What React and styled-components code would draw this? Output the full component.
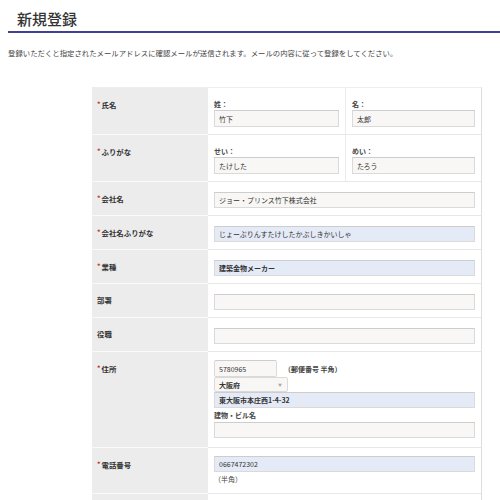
import React from "react";
import styled, { createGlobalStyle } from "styled-components";

const Global = createGlobalStyle`
  html, body { margin: 0; padding: 0; background: #fff; }
  body { font-family: "Noto Sans CJK JP", "Noto Sans", sans-serif; color: #333; }
  * { box-sizing: border-box; }
`;

const Page = styled.div`
  padding-left: 8px;
  width: 500px;
`;

const Title = styled.h1`
  margin: 0;
  padding: 10px 0 4px 9px;
  font-size: 15px;
  line-height: 17px;
  font-weight: 500;
  color: #333;
  border-bottom: 2px solid #3e4090;
`;

const Lead = styled.p`
  margin: 14px 0 0;
  font-size: 7.38px;
  line-height: 11px;
  color: #444;
  white-space: nowrap;
`;

const Table = styled.div`
  margin: 29px 0 0 84px;
  width: 390px;
  border-top: 1px solid #eee;
  border-right: 1px solid #ddd;
`;

const Row = styled.div`
  display: grid;
  grid-template-columns: 116px 1fr;
`;

const Label = styled.div`
  background: #ececec;
  border-bottom: 1px solid #fafafa;
  padding: 10px 0 0 5px;
  font-size: 7.4px;
  line-height: 12px;
  font-weight: 700;
  color: #333;
`;

const Req = styled.span`
  color: #c0392b;
  font-size: 7px;
  margin-right: 1px;
  vertical-align: 1px;
`;

const Value = styled.div`
  border-bottom: 1px solid #e8e8e8;
  padding: ${(p) => p.$pad || "10px 6px 7px"};
  display: flex;
  flex-direction: column;
`;

const Split = styled.div`
  border-bottom: 1px solid #e8e8e8;
  display: grid;
  grid-template-columns: 137px 1fr;
`;

const Half = styled.div`
  padding: 10px 6px 7px;
  border-left: ${(p) => (p.$divider ? "1px solid #ececec" : "none")};
  display: flex;
  flex-direction: column;
`;

const SubLabel = styled.div`
  font-size: 7px;
  line-height: ${(p) => p.$lh || "12px"};
  font-weight: 700;
  color: #444;
`;

const Field = styled.input`
  display: block;
  width: ${(p) => p.$w || "100%"};
  height: ${(p) => p.$h || "16px"};
  margin: 0;
  padding: 0 4px;
  border: 1px solid #dadada;
  border-top-color: #cdcdcd;
  border-radius: ${(p) => p.$r || "0"};
  background: ${(p) => (p.$fill ? "#e4eaf6" : "#f8f7f5")};
  font-family: "Noto Sans CJK JP", sans-serif;
  font-size: 7px;
  font-weight: ${(p) => (p.$bold ? 700 : 400)};
  color: #333;
  outline: none;
`;

const Inline = styled.div`
  display: flex;
  align-items: center;
  gap: 7px;
`;

const Note = styled.span`
  font-size: 7px;
  color: #444;
  font-weight: 700;
`;

const Select = styled.div`
  width: 74px;
  height: 15px;
  border: 1px solid #dadada;
  border-radius: 2px;
  background: #f8f7f5;
  display: flex;
  align-items: center;
  justify-content: space-between;
  padding: 0 5px 0 4px;
  font-size: 7px;
  font-weight: 700;
  color: #333;
`;

const Arrow = styled.span`
  font-size: 4px;
  color: #aaa;
`;

const Hint = styled.div`
  font-size: 7px;
  line-height: 14px;
  color: #444;
`;

function Req2({ children, req }) {
  return (
    <Label>
      {req && <Req>*</Req>}
      {children}
    </Label>
  );
}

export default function App() {
  return (
    <Page>
      <Global />
      <Title>新規登録</Title>
      <Lead>
        登録いただくと指定されたメールアドレスに確認メールが送信されます。メールの内容に従って登録をしてください。
      </Lead>
      <Table>
        <Row>
          <Req2 req>氏名</Req2>
          <Split>
            <Half>
              <SubLabel>姓：</SubLabel>
              <Field readOnly value="竹下" $h="17px" />
            </Half>
            <Half $divider>
              <SubLabel>名：</SubLabel>
              <Field readOnly value="太郎" $h="17px" />
            </Half>
          </Split>
        </Row>
        <Row>
          <Req2 req>ふりがな</Req2>
          <Split>
            <Half>
              <SubLabel>せい：</SubLabel>
              <Field readOnly value="たけした" $h="17px" />
            </Half>
            <Half $divider>
              <SubLabel>めい：</SubLabel>
              <Field readOnly value="たろう" $h="17px" />
            </Half>
          </Split>
        </Row>
        <Row>
          <Req2 req>会社名</Req2>
          <Value>
            <Field readOnly value="ジョー・プリンス竹下株式会社" />
          </Value>
        </Row>
        <Row>
          <Req2 req>会社名ふりがな</Req2>
          <Value>
            <Field readOnly $fill value="じょーぷりんすたけしたかぶしきかいしゃ" />
          </Value>
        </Row>
        <Row>
          <Req2 req>業種</Req2>
          <Value>
            <Field readOnly $fill $bold value="建築金物メーカー" />
          </Value>
        </Row>
        <Row>
          <Req2>部署</Req2>
          <Value>
            <Field readOnly value="" />
          </Value>
        </Row>
        <Row>
          <Req2>役職</Req2>
          <Value>
            <Field readOnly value="" />
          </Value>
        </Row>
        <Row>
          <Req2 req>住所</Req2>
          <Value $pad="8px 6px 9px">
            <Inline>
              <Field readOnly value="5780965" $w="63px" $h="17px" $r="2px" />
              <Note>（郵便番号 半角）</Note>
            </Inline>
            <Select>
              大阪府
              <Arrow>▼</Arrow>
            </Select>
            <Field readOnly $fill $bold value="東大阪市本庄西1-4-32" />
            <SubLabel $lh="14px">建物・ビル名</SubLabel>
            <Field readOnly value="" />
          </Value>
        </Row>
        <Row>
          <Req2 req>電話番号</Req2>
          <Value $pad="8px 6px 7px">
            <Field readOnly $fill value="0667472302" />
            <Hint>（半角）</Hint>
          </Value>
        </Row>
        <Row>
          <Req2> </Req2>
          <Value $pad="10px 6px 7px">
            <Field readOnly value="" />
          </Value>
        </Row>
      </Table>
    </Page>
  );
}
